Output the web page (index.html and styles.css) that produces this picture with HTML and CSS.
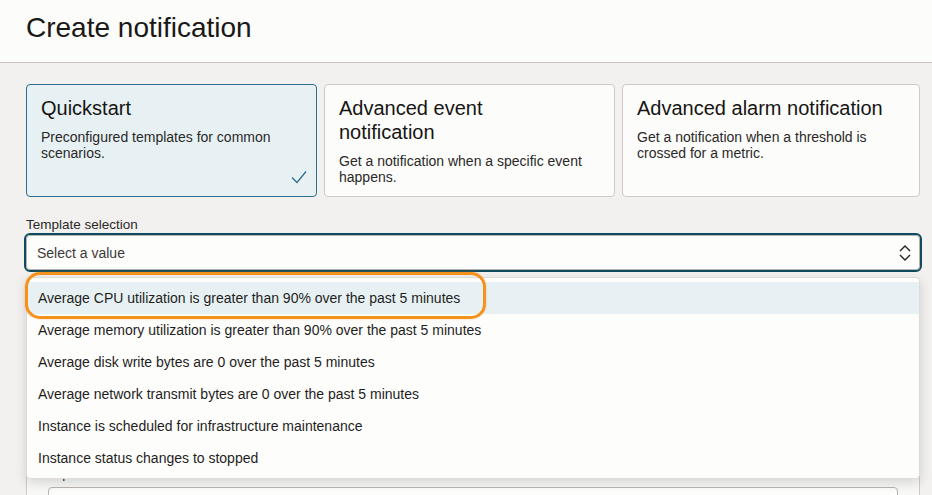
FILE: index.html
```html
<!DOCTYPE html>
<html lang="en">
<head>
<meta charset="utf-8">
<title>Create notification</title>
<link rel="stylesheet" href="styles.css">
</head>
<body>
<header class="page-header">
  <h1 class="page-title">Create notification</h1>
</header>
<main class="content">
  <div class="cards">
    <div class="card card-selected">
      <div class="card-title">Quickstart</div>
      <div class="card-desc">Preconfigured templates for common scenarios.</div>
      <svg class="card-check" width="16" height="14" viewBox="0 0 16 14"><polyline points="1,7.5 6,12.5 15,1.5" fill="none" stroke="#2a6f8e" stroke-width="1.3"/></svg>
    </div>
    <div class="card">
      <div class="card-title">Advanced event notification</div>
      <div class="card-desc">Get a notification when a specific event happens.</div>
    </div>
    <div class="card">
      <div class="card-title">Advanced alarm notification</div>
      <div class="card-desc">Get a notification when a threshold is crossed for a metric.</div>
    </div>
  </div>

  <div class="field">
    <div class="field-label">Template selection</div>
    <div class="select-wrap">
      <div class="select">
        <span class="select-placeholder">Select a value</span>
        <svg class="select-chevron" width="12" height="16" viewBox="0 0 12 16"><polyline points="1,6 6,1 11,6" fill="none" stroke="#222" stroke-width="1.4"/><polyline points="1,10 6,15 11,10" fill="none" stroke="#222" stroke-width="1.4"/></svg>
      </div>
      <ul class="listbox">
        <li class="option option-active">Average CPU utilization is greater than 90% over the past 5 minutes</li>
        <li class="option">Average memory utilization is greater than 90% over the past 5 minutes</li>
        <li class="option">Average disk write bytes are 0 over the past 5 minutes</li>
        <li class="option">Average network transmit bytes are 0 over the past 5 minutes</li>
        <li class="option">Instance is scheduled for infrastructure maintenance</li>
        <li class="option">Instance status changes to stopped</li>
      </ul>
      <div class="callout"></div>
    </div>
  </div>

  <section class="panel">
    <div class="field-label">Topic name</div>
    <div class="text-input"></div>
  </section>
</main>
</body>
</html>
```

FILE: styles.css
```css
* { box-sizing: border-box; }
html, body {
  margin: 0;
  padding: 0;
  height: 100%;
  overflow: hidden;
}
body {
  background: #f2f1f0;
  font-family: "Liberation Sans", Arial, sans-serif;
  color: #161513;
}
.page-header {
  background: #fcfcfb;
  height: 63px;
  border-bottom: 1px solid #c9c3bd;
  padding: 0 26px;
}
.page-title {
  margin: 0;
  font-size: 28px;
  font-weight: normal;
  line-height: 56px;
  color: #1a1816;
}
.content {
  padding: 21px 12px 0 26px;
}
.cards {
  display: grid;
  grid-template-columns: 291px 291px 1fr;
  gap: 7px;
}
.card {
  display: flex;
  flex-direction: column;
  min-height: 113px;
  background: #fcfcfb;
  border: 1px solid #cfcac5;
  border-radius: 4px;
  padding: 11px 31px 9px 14px;
}
.card-selected {
  background: #e7f1f4;
  border-color: #2a6f8e;
}
.card-title {
  font-size: 20px;
  line-height: 24px;
  color: #161513;
}
.card-desc {
  margin-top: 9px;
  font-size: 14px;
  line-height: 16px;
  color: #2a2927;
}
.card-check {
  margin-top: auto;
  align-self: flex-end;
  margin-right: -22px;
  margin-bottom: 3px;
}
.field {
  margin-top: 20px;
}
.field-label {
  font-size: 13.5px;
  line-height: 16px;
  color: #2a2927;
}
.select-wrap {
  position: relative;
  margin-top: 2px;
}
.select {
  height: 35px;
  display: flex;
  align-items: center;
  justify-content: space-between;
  background: #fdfdfc;
  border: 1px solid #b8b3ae;
  border-radius: 4px;
  outline: 2px solid #0e4a60;
  padding: 0 8px 0 10px;
  font-size: 14px;
  color: #3b3a38;
}
.listbox {
  position: absolute;
  top: 42px;
  left: 0;
  right: 0;
  margin: 0;
  padding: 4px 0;
  list-style: none;
  background: #fdfdfc;
  border: 1px solid #dedbd8;
  border-radius: 4px;
  box-shadow: 0 4px 12px rgba(0, 0, 0, 0.14);
  z-index: 2;
}
.option {
  height: 32px;
  line-height: 32px;
  padding-left: 11px;
  font-size: 14px;
  color: #1f1e1c;
}
.option-active {
  background: #e7f1f4;
}
.callout {
  position: absolute;
  top: 37px;
  left: -1px;
  width: 461px;
  height: 47px;
  border: 3px solid #f5921b;
  border-radius: 15px;
  box-shadow: 0 0 2px rgba(245, 146, 27, 0.5);
  z-index: 3;
}
.panel {
  margin-top: 182px;
  background: #f8f8f7;
  border: 1px solid #cfcac5;
  border-radius: 4px;
  padding: 13px 21px 20px 21px;
  min-height: 80px;
}
.text-input {
  margin-top: 5px;
  height: 36px;
  background: #fdfdfc;
  border: 1px solid #b8b3ae;
  border-radius: 4px;
}
```
